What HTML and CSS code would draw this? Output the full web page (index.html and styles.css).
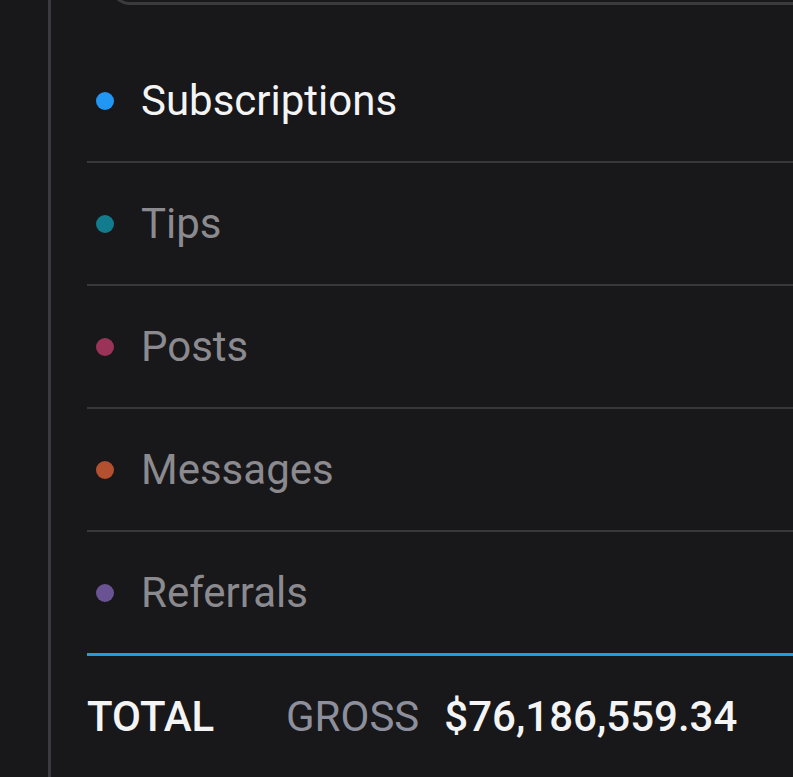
FILE: index.html
```html
<!DOCTYPE html>
<html lang="en">
<head>
<meta charset="utf-8">
<title>Earnings</title>
<link rel="stylesheet" href="styles.css">
</head>
<body>
<div class="page">
  <div class="rail"></div>
  <main class="content">
    <div class="panel-top"></div>
    <ul class="list">
      <li class="row active"><span class="dot dot-blue"></span><span class="label">Subscriptions</span></li>
      <li class="row"><span class="dot dot-teal"></span><span class="label">Tips</span></li>
      <li class="row"><span class="dot dot-pink"></span><span class="label">Posts</span></li>
      <li class="row"><span class="dot dot-orange"></span><span class="label">Messages</span></li>
      <li class="row last"><span class="dot dot-purple"></span><span class="label">Referrals</span></li>
    </ul>
    <div class="total">
      <span class="total-label">TOTAL</span>
      <span class="gross">GROSS</span>
      <span class="amount">$76,186,559.34</span>
    </div>
  </main>
</div>
</body>
</html>
```
FILE: styles.css
```css
html, body {
  margin: 0;
  padding: 0;
  background: #18171a;
  overflow: hidden;
}
body {
  font-family: Roboto, "Liberation Sans", sans-serif;
  width: 793px;
  height: 777px;
}
.page {
  display: flex;
  height: 777px;
}
.rail {
  width: 48px;
  flex: none;
  border-right: 3px solid #3b3a3e;
}
.content {
  flex: 1;
  min-width: 0;
  padding-left: 36px;
}
.panel-top {
  height: 40px;
  margin-top: -35px;
  margin-left: 23px;
  border: 3px solid #3a393e;
  border-right: none;
  border-radius: 40px 0 0 40px;
  box-sizing: border-box;
}
.list {
  list-style: none;
  margin: 35px 0 0 0;
  padding: 0;
}
.row {
  display: flex;
  align-items: center;
  height: 121px;
  border-bottom: 2px solid #38373b;
  font-size: 42px;
  color: #8b8a8e;
}
.row.last {
  border-bottom: 3px solid #1c9fe0;
}
.row.active {
  color: #f4f4f5;
}
.dot {
  width: 18px;
  height: 18px;
  border-radius: 50%;
  margin-left: 9px;
  margin-right: 27px;
  flex: none;
}
.dot-blue { background: #2196f3; }
.dot-teal { background: #127c8e; }
.dot-pink { background: #9a3358; }
.dot-orange { background: #b3502f; }
.dot-purple { background: #6a5393; }
.total {
  display: flex;
  align-items: center;
  height: 120px;
  font-size: 42px;
}
.total-label {
  color: #f4f4f5;
  font-weight: 500;
  width: 199px;
  flex: none;
}
.gross {
  color: #8d909c;
  margin-right: 25px;
}
.amount {
  color: #f4f4f5;
  font-weight: 500;
}
```
